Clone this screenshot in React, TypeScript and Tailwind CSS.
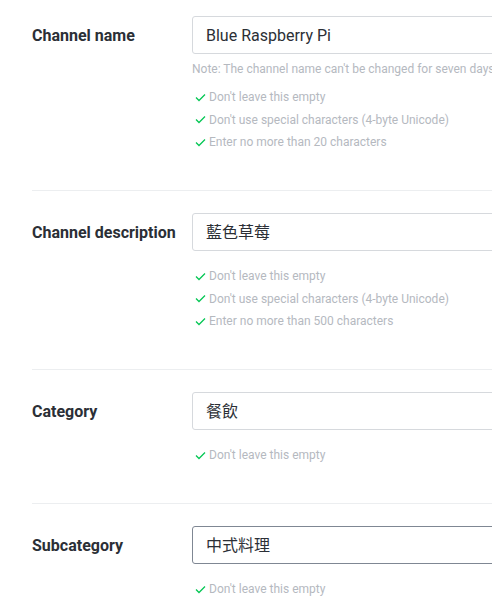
const font = { fontFamily: 'Roboto, "Noto Sans CJK TC", sans-serif' };

type Field = {
  label: string;
  value: string;
  note?: string;
  checks: string[];
  focused?: boolean;
};

const fields: Field[] = [
  {
    label: "Channel name",
    value: "Blue Raspberry Pi",
    note: "Note: The channel name can't be changed for seven days after it's been changed.",
    checks: [
      "Don't leave this empty",
      "Don't use special characters (4-byte Unicode)",
      "Enter no more than 20 characters",
    ],
  },
  {
    label: "Channel description",
    value: "藍色草莓",
    checks: [
      "Don't leave this empty",
      "Don't use special characters (4-byte Unicode)",
      "Enter no more than 500 characters",
    ],
  },
  {
    label: "Category",
    value: "餐飲",
    checks: ["Don't leave this empty"],
  },
  {
    label: "Subcategory",
    value: "中式料理",
    checks: ["Don't leave this empty"],
    focused: true,
  },
];

function Check() {
  return (
    <svg width="11" height="9" viewBox="0 0 11 9" className="shrink-0 mr-[3px]">
      <path d="M1 4.5 L4 7.5 L10 1.5" fill="none" stroke="#06c755" strokeWidth="1.3" />
    </svg>
  );
}

function Row({ f, first }: { f: Field; first: boolean }) {
  return (
    <div
      className={`flex ${
        first ? "pt-4 pb-[36.5px]" : "pt-[22px] pb-[36.5px] border-t border-[#eceef0]"
      }`}
    >
      <div className="w-40 shrink-0 h-[38px] flex items-center pt-px text-[16px] font-bold text-[#2b2f36]">
        {f.label}
      </div>
      <div className="flex-1 min-w-0">
        <div
          className={`h-[38px] w-[340px] rounded-[3px] border flex items-center pt-px px-[13px] text-[16px] text-[#2b2f36] ${
            f.focused ? "border-[#7f8793]" : "border-[#d6d9dd]"
          }`}
        >
          {f.value}
        </div>
        {f.note && (
          <div className="mt-[7px] text-[12px] leading-4 text-[#b5b9bf] whitespace-nowrap">{f.note}</div>
        )}
        <ul className={f.note ? "mt-[9px]" : "mt-[14px]"}>
          {f.checks.map((c) => (
            <li key={c} className="flex items-center h-[22.5px] pl-[3px] text-[12px] text-[#b5b9bf] whitespace-nowrap">
              <Check />
              {c}
            </li>
          ))}
        </ul>
      </div>
    </div>
  );
}

export default function App() {
  return (
    <div className="w-[492px] h-[614px] overflow-hidden bg-white pl-8" style={font}>
      <div className="w-[600px]">
        {fields.map((f, i) => (
          <Row key={f.label} f={f} first={i === 0} />
        ))}
      </div>
    </div>
  );
}
